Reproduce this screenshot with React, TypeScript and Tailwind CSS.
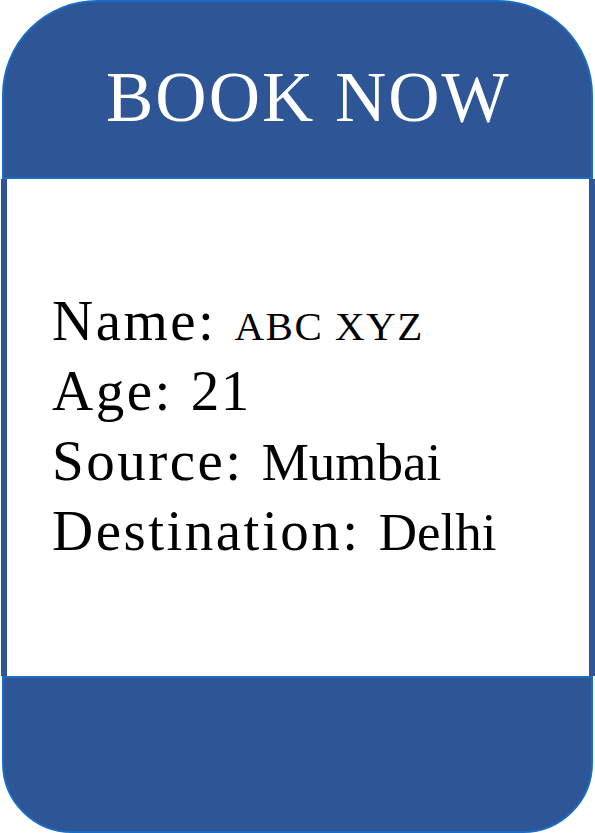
import React from "react";

type Row = {
  label: string;
  value: string;
  valueClass: string;
};

const rows: Row[] = [
  { label: "Name:", value: "ABC XYZ", valueClass: "text-[41px] tracking-[1.5px]" },
  { label: "Age:", value: "21", valueClass: "text-[57px] tracking-[1.5px]" },
  { label: "Source:", value: "Mumbai", valueClass: "text-[53px]" },
  { label: "Destination:", value: "Delhi", valueClass: "text-[53px]" },
];

const App: React.FC = () => {
  return (
    <div className="w-[595px] h-[833px] bg-white flex flex-col font-['Liberation_Serif',serif] overflow-hidden">
      {/* header */}
      <div className="h-[179px] ml-[2px] mr-[2px] rounded-t-[95px] bg-[#2e5596] border-2 border-[#1a6cc4] pt-[60px] pl-[102px]">
        <h1 className="text-[71px] leading-none tracking-[2px] text-white">BOOK NOW</h1>
      </div>

      {/* details */}
      <div className="flex-1 ml-[1px] border-l-[6px] border-r-[6px] border-[#2e5596] pt-[107px] pl-[45px]">
        {rows.map((row) => (
          <div
            key={row.label}
            className="flex items-baseline gap-[18px] h-[70px] leading-[70px] text-black whitespace-nowrap"
          >
            <span className="text-[57px] tracking-[2.5px]">{row.label}</span>
            <span className={row.valueClass}>{row.value}</span>
          </div>
        ))}
      </div>

      {/* footer */}
      <div className="h-[157px] ml-[2px] mr-[2px] rounded-b-[70px] bg-[#2e5596] border-2 border-[#1a6cc4]" />
    </div>
  );
};

export default App;
